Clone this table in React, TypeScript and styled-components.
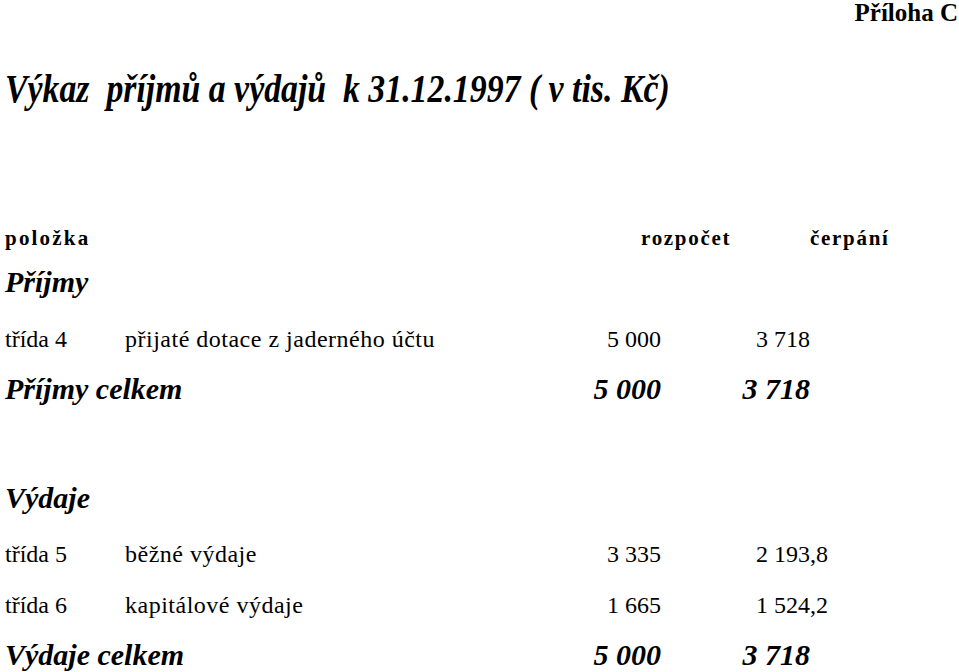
import React from 'react';
import styled, { createGlobalStyle, css } from 'styled-components';

const GlobalStyle = createGlobalStyle`
    html,
    body {
        margin: 0;
        padding: 0;
        background: #fff;
        overflow: hidden;
    }

    body {
        font-family: 'Liberation Serif', 'Times New Roman', serif;
        color: #000;
    }
`;

type Item = {
    label: string;
    text: string;
    budget: string;
    spent: string;
};

type Section = {
    title: string;
    items: Item[];
    totalLabel: string;
    totalBudget: string;
    totalSpent: string;
    gap: number;
};

const sections: Section[] = [
    {
        title: 'Příjmy',
        items: [
            {
                label: 'třída 4',
                text: 'přijaté dotace z jaderného účtu',
                budget: '5 000',
                spent: '3 718',
            },
        ],
        totalLabel: 'Příjmy celkem',
        totalBudget: '5 000',
        totalSpent: '3 718',
        gap: 13,
    },
    {
        title: 'Výdaje',
        items: [
            {
                label: 'třída 5',
                text: 'běžné výdaje',
                budget: '3 335',
                spent: '2 193,8',
            },
            {
                label: 'třída 6',
                text: 'kapitálové výdaje',
                budget: '1 665',
                spent: '1 524,2',
            },
        ],
        totalLabel: 'Výdaje celkem',
        totalBudget: '5 000',
        totalSpent: '3 718',
        gap: 73,
    },
];

const itemGaps = [24, 23, 21];

// splits "2 193,8" into "2 193" and ",8" so the column lines up on the comma
const splitDecimal = (value: string) => {
    const idx = value.indexOf(',');
    if (idx === -1) return [value, ''];
    return [value.slice(0, idx), value.slice(idx)];
};

const App = () => {
    let itemIndex = 0;

    return (
        <Page>
            <GlobalStyle />
            <Attachment>Příloha C</Attachment>
            <Title>
                <TitleText>Výkaz&nbsp; příjmů a výdajů&nbsp; k 31.12.1997 ( v tis. Kč)</TitleText>
            </Title>

            <HeaderRow>
                <HeaderCell $spacing={2.2}>položka</HeaderCell>
                <HeaderCell $spacing={1.7}>rozpočet</HeaderCell>
                <HeaderCell $spacing={1.7}>čerpání</HeaderCell>
            </HeaderRow>

            {sections.map((section) => (
                <React.Fragment key={section.title}>
                    <SectionTitle $gap={section.gap}>{section.title}</SectionTitle>
                    {section.items.map((item) => {
                        const [whole, fraction] = splitDecimal(item.spent);
                        const gap = itemGaps[itemIndex++];
                        return (
                            <ItemRow key={item.label} $gap={gap}>
                                <span>{item.label}</span>
                                <Description>{item.text}</Description>
                                <Amount>{item.budget}</Amount>
                                <Amount>{whole}</Amount>
                                <Fraction>{fraction}</Fraction>
                            </ItemRow>
                        );
                    })}
                    <TotalRow $gap={17}>
                        <TotalLabel>{section.totalLabel}</TotalLabel>
                        <Amount>{section.totalBudget}</Amount>
                        <Amount>{section.totalSpent}</Amount>
                    </TotalRow>
                </React.Fragment>
            ))}
        </Page>
    );
};

export default App;

const Page = styled.main`
    width: 959px;
    height: 672px;
    box-sizing: border-box;
    padding: 1px 0 0 5px;
    display: flex;
    flex-direction: column;
`;

const Attachment = styled.div`
    align-self: flex-end;
    font-size: 25px;
    line-height: 24px;
    font-weight: bold;
    padding-right: 1px;
`;

const Title = styled.h1`
    margin: 40px 0 0;
    font-size: 40px;
    line-height: 48px;
    font-weight: bold;
    font-style: italic;
    white-space: nowrap;
`;

const TitleText = styled.span`
    display: inline-block;
    transform: scaleX(0.845);
    transform-origin: left center;
`;

const HeaderRow = styled.div`
    margin-top: 112px;
    display: grid;
    grid-template-columns: 636px 169px auto;
    font-size: 21px;
    line-height: 26px;
    font-weight: bold;
`;

const HeaderCell = styled.span<{ $spacing: number }>`
    letter-spacing: ${(p) => p.$spacing}px;
`;

const SectionTitle = styled.h2<{ $gap: number }>`
    margin: ${(p) => p.$gap}px 0 0;
    font-size: 30px;
    line-height: 36px;
    font-weight: bold;
    font-style: italic;
`;

const columns = css`
    display: grid;
    grid-template-columns: 120px 400px 136px 149px 60px;
`;

const ItemRow = styled.div<{ $gap: number }>`
    ${columns};
    margin-top: ${(p) => p.$gap}px;
    font-size: 24px;
    line-height: 30px;
    white-space: nowrap;
`;

const Description = styled.span`
    letter-spacing: 0.5px;
`;

const TotalRow = styled.div<{ $gap: number }>`
    ${columns};
    margin-top: ${(p) => p.$gap}px;
    font-size: 30px;
    line-height: 36px;
    font-weight: bold;
    font-style: italic;
    white-space: nowrap;
`;

const TotalLabel = styled.span`
    grid-column: 1 / 3;
`;

const Amount = styled.span`
    text-align: right;
`;

const Fraction = styled.span`
    text-align: left;
`;
